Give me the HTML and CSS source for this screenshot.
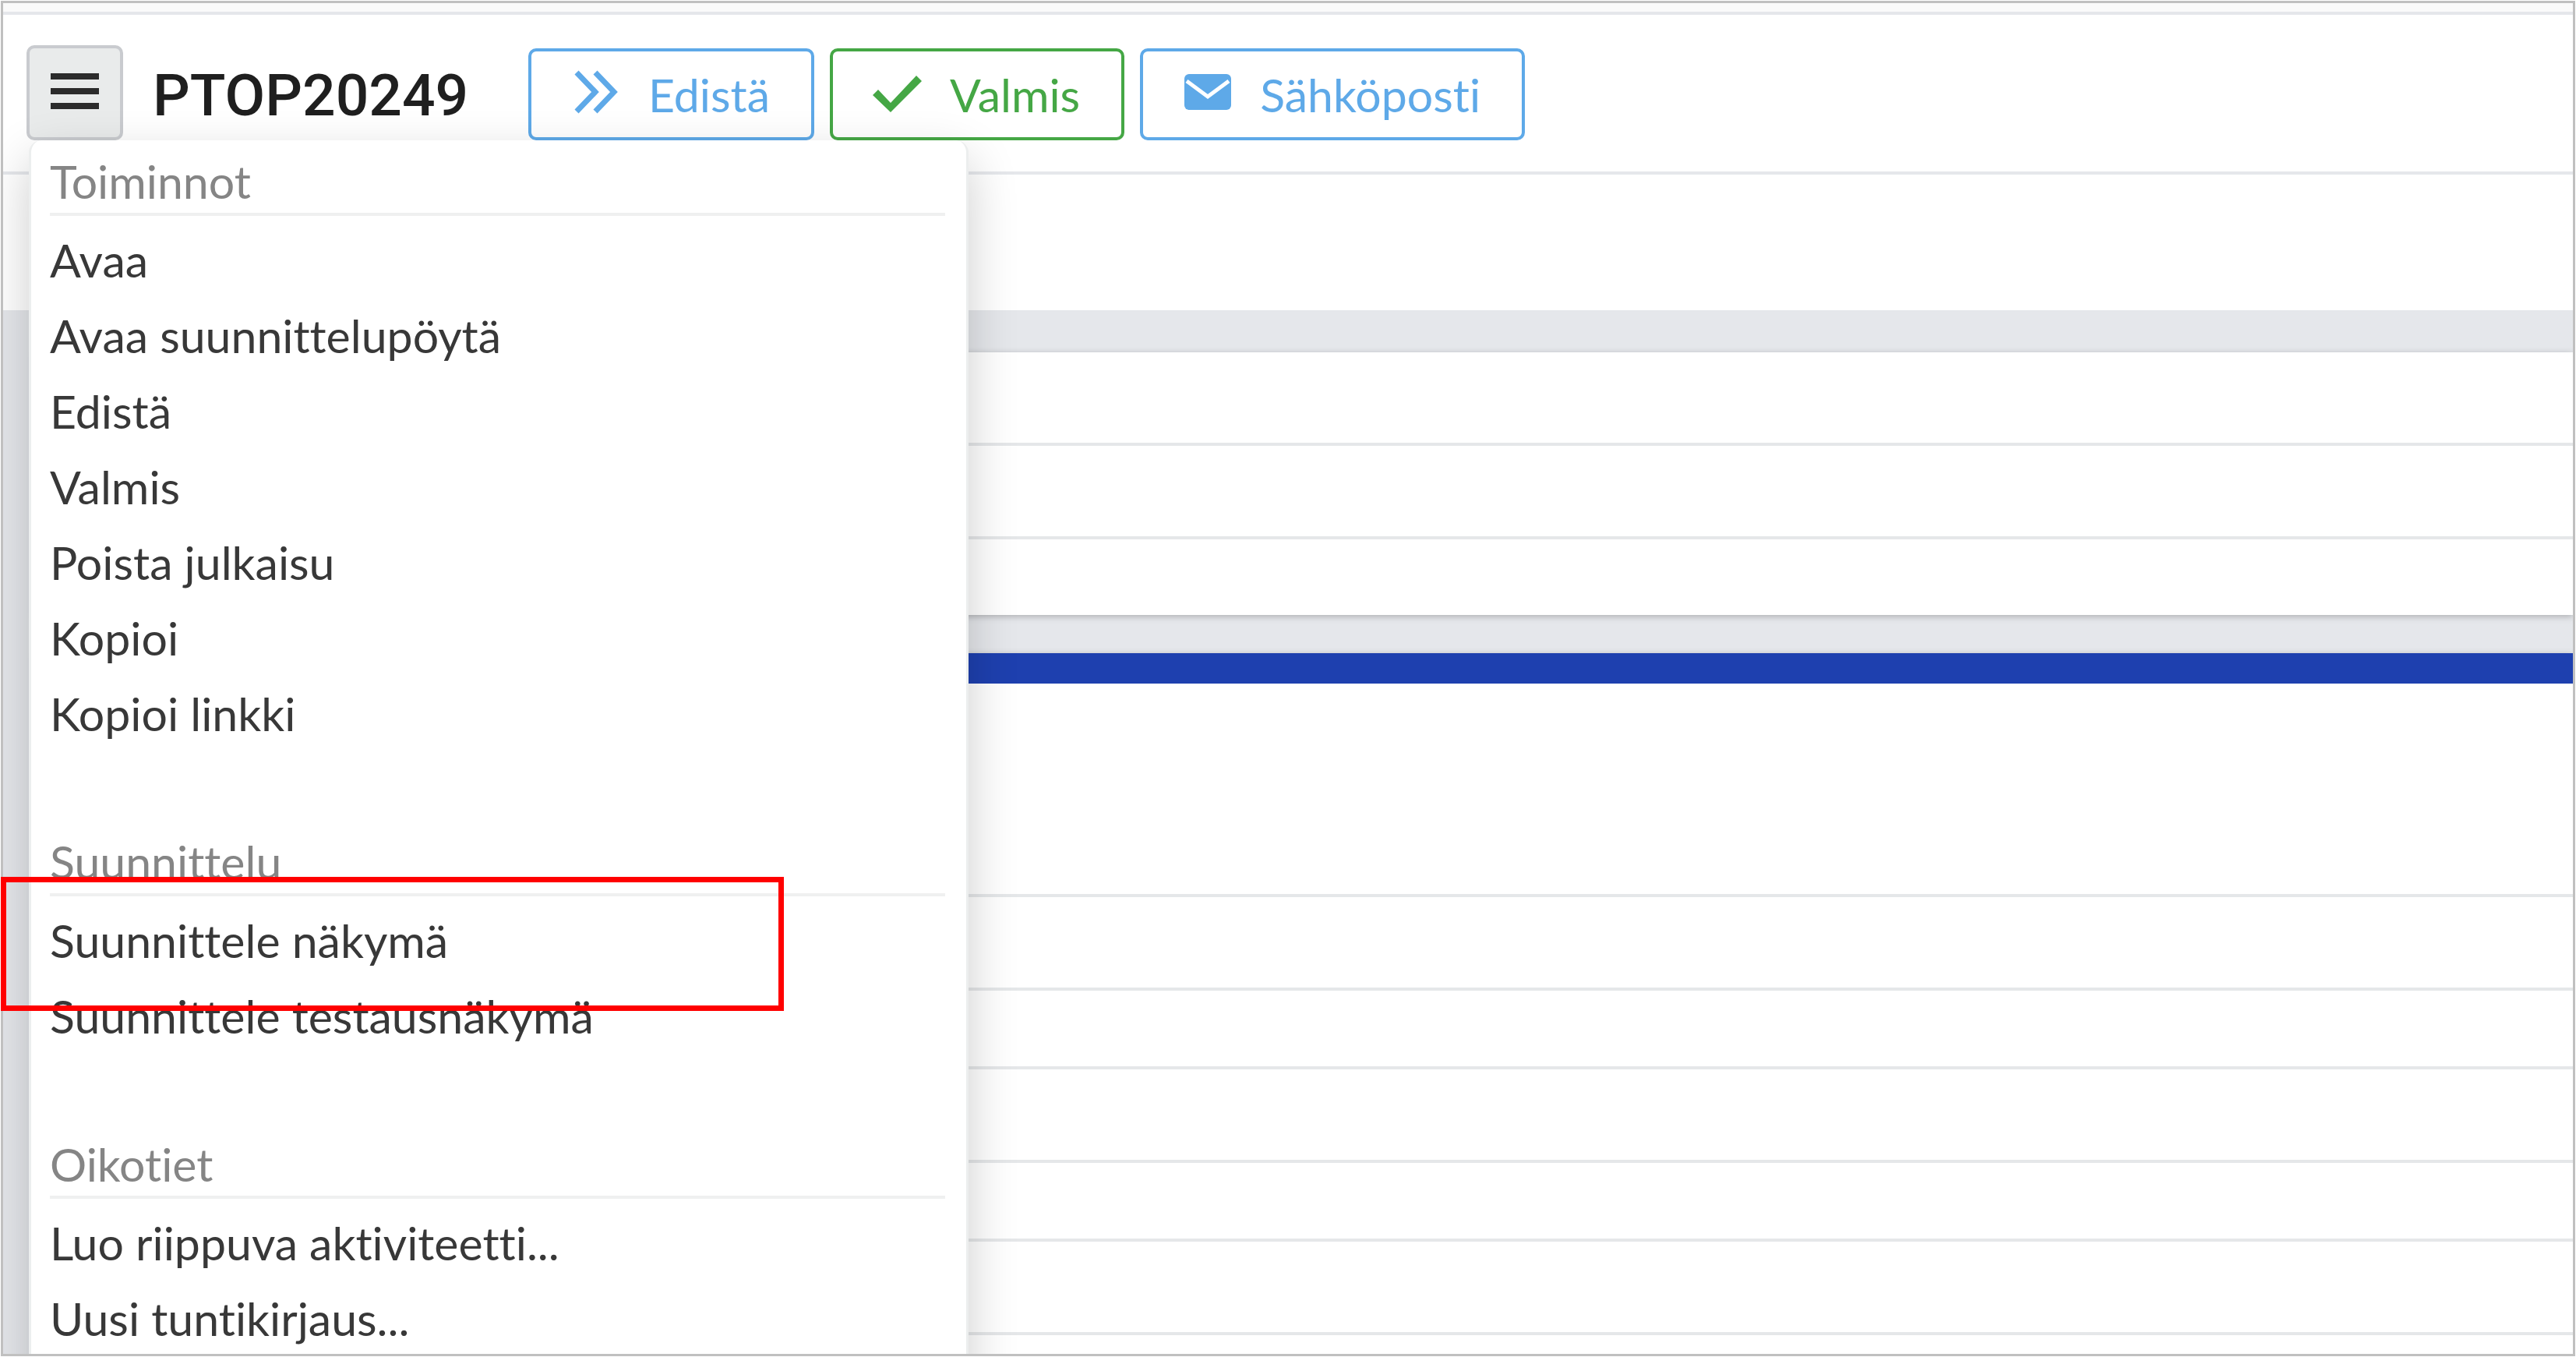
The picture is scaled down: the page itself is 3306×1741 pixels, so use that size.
FILE: index.html
```html
<!DOCTYPE html>
<html lang="fi">
<head>
<meta charset="utf-8">
<title>PTOP20249</title>
<link rel="stylesheet" href="styles.css">
</head>
<body>
<div class="frame">
  <div class="top-strip"></div>
  <header class="toolbar">
    <div class="menu-anchor">
      <button class="menu-button" type="button" aria-label="Valikko" aria-expanded="true">
        <svg class="menu-icon" viewBox="0 0 62 46" aria-hidden="true"><path d="M0 0h62v8H0zM0 19h62v8H0zM0 38h62v8H0z"/></svg>
      </button>
      <nav class="menu">
        <section class="menu-group">
          <h2 class="menu-heading">Toiminnot</h2>
          <a class="menu-item" href="#">Avaa</a>
          <a class="menu-item" href="#">Avaa suunnittelupöytä</a>
          <a class="menu-item" href="#">Edistä</a>
          <a class="menu-item" href="#">Valmis</a>
          <a class="menu-item" href="#">Poista julkaisu</a>
          <a class="menu-item" href="#">Kopioi</a>
          <a class="menu-item" href="#">Kopioi linkki</a>
        </section>
        <section class="menu-group">
          <h2 class="menu-heading">Suunnittelu</h2>
          <a class="menu-item" href="#">Suunnittele näkymä</a>
          <a class="menu-item" href="#">Suunnittele testausnäkymä</a>
        </section>
        <section class="menu-group">
          <h2 class="menu-heading">Oikotiet</h2>
          <a class="menu-item" href="#">Luo riippuva aktiviteetti...</a>
          <a class="menu-item" href="#">Uusi tuntikirjaus...</a>
        </section>
      </nav>
    </div>
    <h1 class="title">PTOP20249</h1>
    <div class="actions">
      <button class="action action-blue" type="button">
        <svg class="action-icon" viewBox="0 0 64 60" aria-hidden="true"><path class="stroke" d="M7 6l24 25L7 56M31 6l24 25-24 25"/></svg>
        Edistä
      </button>
      <button class="action action-green" type="button">
        <svg class="action-icon" viewBox="0 0 64 60" aria-hidden="true"><path d="M0 35l7-7 16 17L56 10l7 7-40 40z"/></svg>
        Valmis
      </button>
      <button class="action action-blue" type="button">
        <svg class="action-icon" viewBox="0 0 64 60" aria-hidden="true"><rect x="2" y="8" width="60" height="46" rx="6"/><path class="fold" d="M5 17l27 20 27-20"/></svg>
        Sähköposti
      </button>
    </div>
  </header>
  <div class="subheader"></div>
  <main class="content">
    <section class="card">
      <div class="row row-tall"></div>
      <div class="row row-tall"></div>
      <div class="row"></div>
    </section>
    <section class="card card-accent">
      <div class="row row-intro"></div>
      <div class="row row-tall"></div>
      <div class="row"></div>
      <div class="row row-tall"></div>
      <div class="row"></div>
      <div class="row row-tall"></div>
      <div class="row"></div>
    </section>
  </main>
  <div class="highlight"></div>
</div>
</body>
</html>
```
FILE: styles.css
```css
* {
  box-sizing: border-box;
}

body {
  margin: 0;
  padding: 1px;
  height: 100vh;
  overflow: hidden;
  background: #fff;
  color: #383838;
  font-family: Lato, "Liberation Sans", sans-serif;
  font-size: 59px;
  font-variant-ligatures: none;
}

.frame {
  height: 100%;
  overflow: hidden;
  border: 3px solid #c0c0c0;
  background: #e5e7eb;
}

.top-strip {
  height: 15px;
  border-bottom: 4px solid #e5e7eb;
  background: #fafafa;
}

.toolbar {
  display: flex;
  align-items: flex-end;
  padding: 39px 30px 40px;
  border-bottom: 4px solid #e5e7eb;
  background: #fff;
}

.menu-anchor {
  position: relative;
}

.menu-button {
  display: flex;
  align-items: center;
  justify-content: center;
  width: 124px;
  height: 122px;
  padding: 0 0 4px;
  border: 4px solid #c9cbcf;
  border-radius: 10px;
  background: #e9ebeb;
}

.menu-icon {
  width: 62px;
  height: 46px;
  fill: #2b2b2b;
}

.menu {
  position: absolute;
  z-index: 2;
  top: 100%;
  left: 3px;
  width: 1206px;
  padding: 13px 27px 40px 24px;
  border: 3px solid #eceeee;
  border-top: 0;
  border-radius: 16px;
  background: #fff;
  box-shadow: 0 24px 64px rgba(0, 0, 0, 0.2);
}

.menu-group {
  margin-bottom: 102px;
}

.menu-heading {
  margin: 0 0 8px;
  border-bottom: 4px solid #eff0f0;
  color: #858585;
  font-size: 59px;
  font-weight: 400;
  line-height: 80px;
}

.menu-item {
  display: block;
  color: #383838;
  line-height: 97px;
  text-decoration: none;
}

.title {
  width: 446px;
  margin: 0 0 0 38px;
  padding-top: 2px;
  color: #1f1f1f;
  font-family: Roboto, "Liberation Sans", sans-serif;
  font-size: 75px;
  font-weight: 500;
  line-height: 116px;
}

.actions {
  display: flex;
  gap: 20px;
  margin-left: 36px;
}

.action {
  display: flex;
  align-items: center;
  gap: 35px;
  height: 118px;
  padding: 0 53px 0 51px;
  border: 4px solid;
  border-radius: 10px;
  background: #fff;
  font: inherit;
  font-variant-ligatures: none;
}

.action-blue {
  color: #5ea9e8;
}

.action-green {
  color: #45a745;
}

.action-icon {
  width: 64px;
  height: 60px;
  margin-bottom: 8px;
  fill: currentColor;
}

.stroke {
  fill: none;
  stroke: currentColor;
  stroke-width: 7;
}

.fold {
  fill: none;
  stroke: #fff;
  stroke-width: 5;
}

.subheader {
  height: 174px;
  background: #fff;
}

.content {
  display: flex;
  flex-direction: column;
  gap: 49px;
  padding: 54px 0 0 40px;
}

.card {
  background: #fff;
  box-shadow: 0 2px 8px rgba(0, 0, 0, 0.25);
}

.card-accent {
  border-top: 39px solid #1e40af;
}

.row {
  height: 101px;
  border-bottom: 4px solid #e5e7e9;
}

.row-tall {
  height: 120px;
}

.row-intro {
  height: 274px;
}

.row:last-child {
  height: 97px;
  border-bottom: 0;
}

.highlight {
  position: absolute;
  z-index: 3;
  top: 1125px;
  left: 1px;
  width: 1005px;
  height: 172px;
  border: 7px solid #f00;
}
```
